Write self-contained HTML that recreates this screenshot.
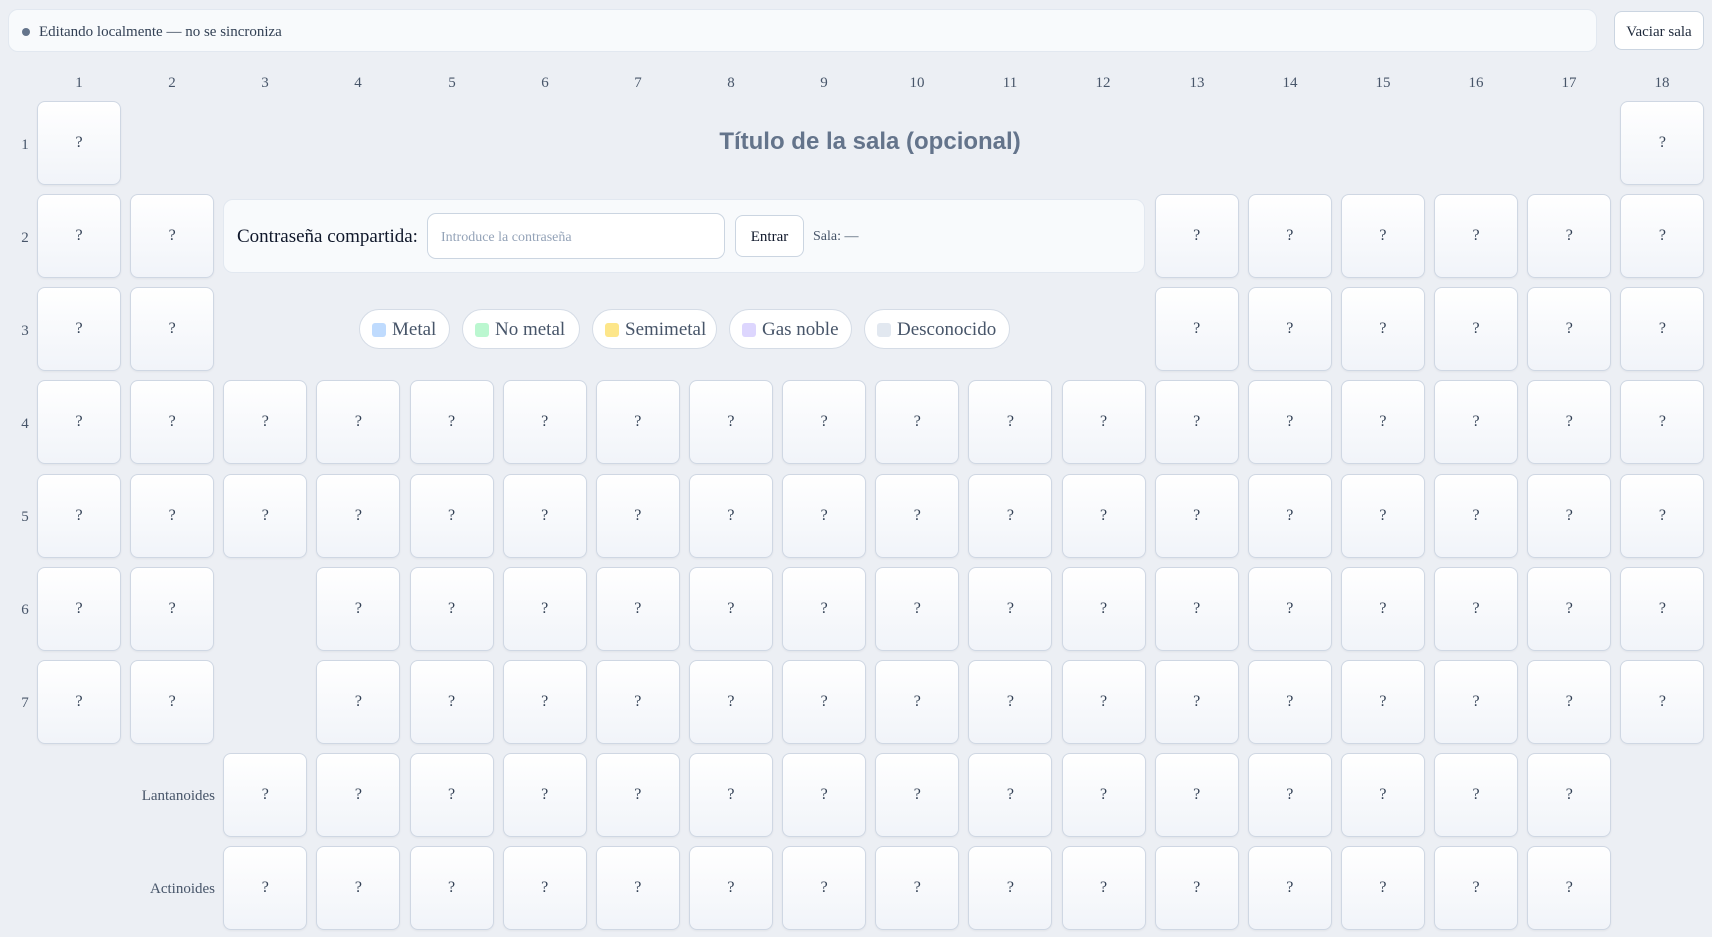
<!DOCTYPE html>
<html><head><meta charset="utf-8"><style>
*{box-sizing:border-box;margin:0;padding:0}
body{width:1712px;height:937px;background:#eceff4;font-family:"Liberation Serif",serif;color:#334155;position:relative;overflow:hidden}
.top{position:absolute;left:8px;top:9px;width:1589px;height:43px;background:#f8fafc;border:1px solid #e2e8f0;border-radius:10px;font-size:15px;color:#334155;display:flex;align-items:center;padding-left:13px;padding-top:3px}
.dot{width:8px;height:8px;border-radius:50%;background:#64748b;margin-right:9px}
.vac{position:absolute;left:1614px;top:11px;width:90px;height:39px;background:#fff;border:1px solid #cbd5e1;border-radius:8px;font-size:15px;color:#1e293b;display:flex;align-items:center;justify-content:center;padding-top:3px}
.hdr{position:absolute;top:75px;width:84px;text-align:center;font-size:15px;color:#475569}
.rl{position:absolute;left:18px;width:14px;text-align:center;font-size:15px;color:#475569;margin-top:3px}
.grid{position:absolute;left:37px;top:101px;display:grid;grid-template-columns:repeat(18,84px);grid-auto-rows:84px;column-gap:9.15px;row-gap:9.15px}
.c{background:linear-gradient(#fff,#f1f4f9);border:1px solid #cfd7e3;border-radius:8px;display:flex;align-items:center;justify-content:center;font-size:16px;color:#334155;box-shadow:0 1px 2px rgba(0,0,0,.05)}
.title{position:absolute;left:600px;width:540px;top:128px;text-align:center;font-family:"Liberation Sans",sans-serif;font-weight:bold;font-size:24px;color:#64748b}
.pan{position:absolute;left:223px;top:199px;width:922px;height:74px;background:#f8fafc;border:1px solid #e2e8f0;border-radius:10px}
.lab{position:absolute;left:237px;top:226px;font-size:19px;color:#0f172a}
.inp{position:absolute;left:427px;top:213px;width:298px;height:46px;background:#fff;border:1px solid #cbd5e1;border-radius:9px;font-size:14px;color:#94a3b8;padding:16px 13px 0}
.ent{position:absolute;left:735px;top:215px;width:69px;height:42px;background:#fff;border:1px solid #cbd5e1;border-radius:8px;font-size:15px;color:#0f172a;display:flex;align-items:center;justify-content:center;padding-top:2px}
.sala{position:absolute;left:813px;top:229px;font-size:14px;color:#475569}
.pill{position:absolute;top:309px;height:40px;background:#fff;border:1px solid #d5dce6;border-radius:20px;font-size:19px;color:#475569;display:flex;align-items:center;padding-left:12px;padding-top:2px}
.sw{width:14px;height:14px;border-radius:3px;margin-right:6px}
.ll{position:absolute;right:1497px;font-size:15px;color:#475569}
</style></head><body>
<div class="top"><span class="dot"></span>Editando localmente — no se sincroniza</div>
<div class="vac">Vaciar sala</div>
<div class="hdr" style="left:37px">1</div><div class="hdr" style="left:130px">2</div><div class="hdr" style="left:223px">3</div><div class="hdr" style="left:316px">4</div><div class="hdr" style="left:410px">5</div><div class="hdr" style="left:503px">6</div><div class="hdr" style="left:596px">7</div><div class="hdr" style="left:689px">8</div><div class="hdr" style="left:782px">9</div><div class="hdr" style="left:875px">10</div><div class="hdr" style="left:968px">11</div><div class="hdr" style="left:1061px">12</div><div class="hdr" style="left:1155px">13</div><div class="hdr" style="left:1248px">14</div><div class="hdr" style="left:1341px">15</div><div class="hdr" style="left:1434px">16</div><div class="hdr" style="left:1527px">17</div><div class="hdr" style="left:1620px">18</div>
<div class="rl" style="top:134px">1</div><div class="rl" style="top:227px">2</div><div class="rl" style="top:320px">3</div><div class="rl" style="top:413px">4</div><div class="rl" style="top:506px">5</div><div class="rl" style="top:599px">6</div><div class="rl" style="top:692px">7</div>
<div class="ll" style="top:788px">Lantanoides</div>
<div class="ll" style="top:881px">Actinoides</div>
<div class="grid">
<div class="c">?</div><div></div><div></div><div></div><div></div><div></div><div></div><div></div><div></div><div></div><div></div><div></div><div></div><div></div><div></div><div></div><div></div><div class="c">?</div>
<div class="c">?</div><div class="c">?</div><div></div><div></div><div></div><div></div><div></div><div></div><div></div><div></div><div></div><div></div><div class="c">?</div><div class="c">?</div><div class="c">?</div><div class="c">?</div><div class="c">?</div><div class="c">?</div>
<div class="c">?</div><div class="c">?</div><div></div><div></div><div></div><div></div><div></div><div></div><div></div><div></div><div></div><div></div><div class="c">?</div><div class="c">?</div><div class="c">?</div><div class="c">?</div><div class="c">?</div><div class="c">?</div>
<div class="c">?</div><div class="c">?</div><div class="c">?</div><div class="c">?</div><div class="c">?</div><div class="c">?</div><div class="c">?</div><div class="c">?</div><div class="c">?</div><div class="c">?</div><div class="c">?</div><div class="c">?</div><div class="c">?</div><div class="c">?</div><div class="c">?</div><div class="c">?</div><div class="c">?</div><div class="c">?</div>
<div class="c">?</div><div class="c">?</div><div class="c">?</div><div class="c">?</div><div class="c">?</div><div class="c">?</div><div class="c">?</div><div class="c">?</div><div class="c">?</div><div class="c">?</div><div class="c">?</div><div class="c">?</div><div class="c">?</div><div class="c">?</div><div class="c">?</div><div class="c">?</div><div class="c">?</div><div class="c">?</div>
<div class="c">?</div><div class="c">?</div><div></div><div class="c">?</div><div class="c">?</div><div class="c">?</div><div class="c">?</div><div class="c">?</div><div class="c">?</div><div class="c">?</div><div class="c">?</div><div class="c">?</div><div class="c">?</div><div class="c">?</div><div class="c">?</div><div class="c">?</div><div class="c">?</div><div class="c">?</div>
<div class="c">?</div><div class="c">?</div><div></div><div class="c">?</div><div class="c">?</div><div class="c">?</div><div class="c">?</div><div class="c">?</div><div class="c">?</div><div class="c">?</div><div class="c">?</div><div class="c">?</div><div class="c">?</div><div class="c">?</div><div class="c">?</div><div class="c">?</div><div class="c">?</div><div class="c">?</div>
<div></div><div></div><div class="c">?</div><div class="c">?</div><div class="c">?</div><div class="c">?</div><div class="c">?</div><div class="c">?</div><div class="c">?</div><div class="c">?</div><div class="c">?</div><div class="c">?</div><div class="c">?</div><div class="c">?</div><div class="c">?</div><div class="c">?</div><div class="c">?</div><div></div>
<div></div><div></div><div class="c">?</div><div class="c">?</div><div class="c">?</div><div class="c">?</div><div class="c">?</div><div class="c">?</div><div class="c">?</div><div class="c">?</div><div class="c">?</div><div class="c">?</div><div class="c">?</div><div class="c">?</div><div class="c">?</div><div class="c">?</div><div class="c">?</div><div></div>
</div>
<div class="title">Título de la sala (opcional)</div>
<div class="pan"></div>
<div class="lab">Contraseña compartida:</div>
<div class="inp">Introduce la contraseña</div>
<div class="ent">Entrar</div>
<div class="sala">Sala: —</div>
<div class="pill" style="left:359px;width:91px"><span class="sw" style="background:#bfdbfe"></span>Metal</div>
<div class="pill" style="left:462px;width:118px"><span class="sw" style="background:#bbf7d0"></span>No metal</div>
<div class="pill" style="left:592px;width:125px"><span class="sw" style="background:#fde68a"></span>Semimetal</div>
<div class="pill" style="left:729px;width:123px"><span class="sw" style="background:#ddd6fe"></span>Gas noble</div>
<div class="pill" style="left:864px;width:146px"><span class="sw" style="background:#e2e8f0"></span>Desconocido</div>
</body></html>
